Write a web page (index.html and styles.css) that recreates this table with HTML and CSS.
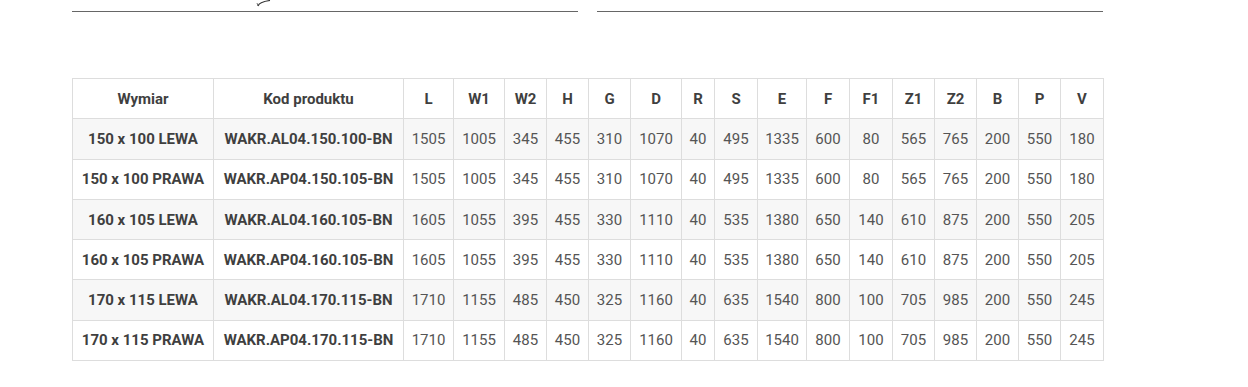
FILE: index.html
```html
<!DOCTYPE html>
<html lang="pl">
<head>
<meta charset="utf-8">
<link rel="stylesheet" href="styles.css">
</head>
<body>
<div class="page">
  <svg class="sliver" width="20" height="8" viewBox="0 0 20 8" aria-hidden="true">
    <path d="M4 6 C5 3 8 1.5 16 0.5" fill="none" stroke="#333" stroke-width="1.2"/>
    <path d="M4 6 L3 3" fill="none" stroke="#555" stroke-width="0.8"/>
  </svg>
  <div class="rules">
    <div class="rule"></div>
    <div class="rule"></div>
  </div>
  <table class="spec">
    <colgroup>
      <col class="c141"><col class="c190"><col class="c50"><col class="c51"><col class="c42"><col class="c42"><col class="c42"><col class="c51"><col class="c33"><col class="c43"><col class="c49"><col class="c43"><col class="c43"><col class="c42"><col class="c42"><col class="c42"><col class="c42"><col class="c43">
    </colgroup>
    <thead>
      <tr><th>Wymiar</th><th>Kod produktu</th><th>L</th><th>W1</th><th>W2</th><th>H</th><th>G</th><th>D</th><th>R</th><th>S</th><th>E</th><th>F</th><th>F1</th><th>Z1</th><th>Z2</th><th>B</th><th>P</th><th>V</th></tr>
    </thead>
    <tbody>
      <tr><th>150 x 100 LEWA</th><th>WAKR.AL04.150.100-BN</th><td>1505</td><td>1005</td><td>345</td><td>455</td><td>310</td><td>1070</td><td>40</td><td>495</td><td>1335</td><td>600</td><td>80</td><td>565</td><td>765</td><td>200</td><td>550</td><td>180</td></tr>
      <tr><th>150 x 100 PRAWA</th><th>WAKR.AP04.150.105-BN</th><td>1505</td><td>1005</td><td>345</td><td>455</td><td>310</td><td>1070</td><td>40</td><td>495</td><td>1335</td><td>600</td><td>80</td><td>565</td><td>765</td><td>200</td><td>550</td><td>180</td></tr>
      <tr><th>160 x 105 LEWA</th><th>WAKR.AL04.160.105-BN</th><td>1605</td><td>1055</td><td>395</td><td>455</td><td>330</td><td>1110</td><td>40</td><td>535</td><td>1380</td><td>650</td><td>140</td><td>610</td><td>875</td><td>200</td><td>550</td><td>205</td></tr>
      <tr><th>160 x 105 PRAWA</th><th>WAKR.AP04.160.105-BN</th><td>1605</td><td>1055</td><td>395</td><td>455</td><td>330</td><td>1110</td><td>40</td><td>535</td><td>1380</td><td>650</td><td>140</td><td>610</td><td>875</td><td>200</td><td>550</td><td>205</td></tr>
      <tr><th>170 x 115 LEWA</th><th>WAKR.AL04.170.115-BN</th><td>1710</td><td>1155</td><td>485</td><td>450</td><td>325</td><td>1160</td><td>40</td><td>635</td><td>1540</td><td>800</td><td>100</td><td>705</td><td>985</td><td>200</td><td>550</td><td>245</td></tr>
      <tr><th>170 x 115 PRAWA</th><th>WAKR.AP04.170.115-BN</th><td>1710</td><td>1155</td><td>485</td><td>450</td><td>325</td><td>1160</td><td>40</td><td>635</td><td>1540</td><td>800</td><td>100</td><td>705</td><td>985</td><td>200</td><td>550</td><td>245</td></tr>
    </tbody>
  </table>
</div>
</body>
</html>
```

FILE: styles.css
```css
html, body {
  margin: 0;
  padding: 0;
  background: #fff;
}
.page {
  position: relative;
  padding-left: 72px;
  font-family: Roboto, "Liberation Sans", Arial, sans-serif;
}
.sliver {
  position: absolute;
  left: 254px;
  top: 0;
}
.rules {
  display: flex;
  gap: 19px;
  padding-top: 11px;
  width: 1031px;
}
.rule {
  flex: 1;
  height: 1px;
  background: #666;
}
.spec {
  margin-top: 66px;
  border-collapse: collapse;
  table-layout: fixed;
  width: 1031px;
  font-size: 15px;
  color: #555;
}
.spec th, .spec td {
  border: 1px solid #ddd;
  height: 39.3px;
  padding: 0;
  text-align: center;
  vertical-align: middle;
}
.spec th {
  font-weight: 700;
  color: #3f3f3f;
}
.spec tbody tr:nth-child(odd) {
  background: #f7f7f7;
}
.c141 { width: 141px; }
.c190 { width: 190px; }
.c50 { width: 50px; }
.c51 { width: 51px; }
.c49 { width: 49px; }
.c43 { width: 43px; }
.c42 { width: 42px; }
.c33 { width: 33px; }
```
